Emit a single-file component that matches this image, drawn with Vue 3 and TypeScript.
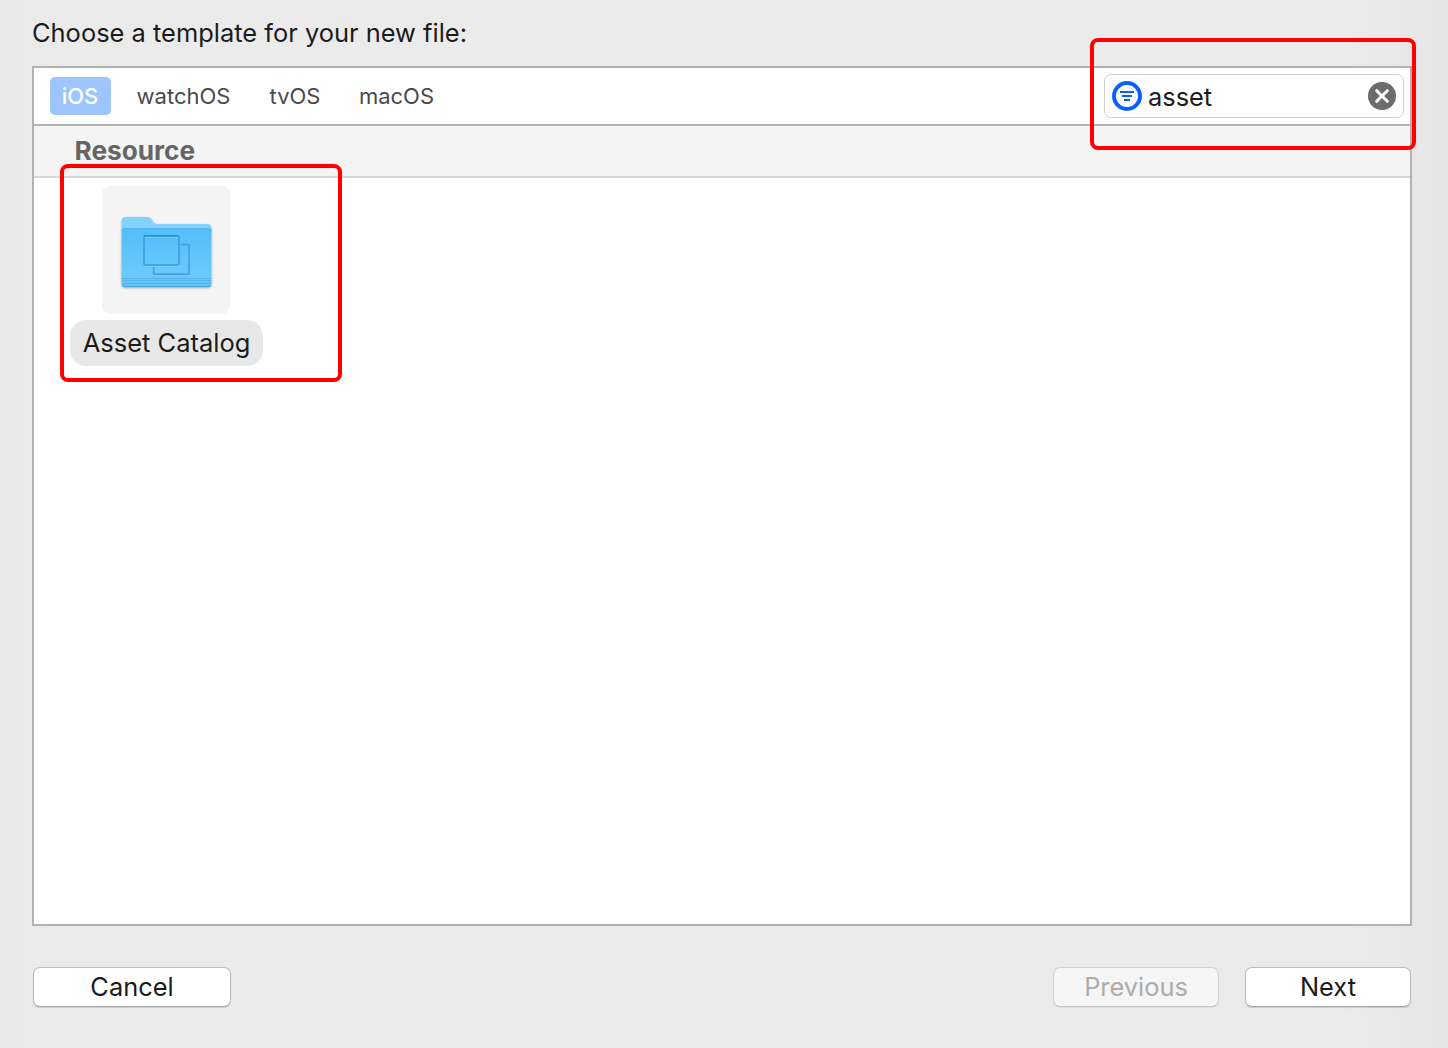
<script setup lang="ts">
import { ref } from 'vue'

interface Platform {
  name: string
  slug: string
}

const platforms: Platform[] = [
  { name: 'iOS', slug: 'ios' },
  { name: 'watchOS', slug: 'watchos' },
  { name: 'tvOS', slug: 'tvos' },
  { name: 'macOS', slug: 'macos' },
]
const selected = ref('ios')
const query = ref('asset')
</script>

<template>
  <main class="dialog">
    <h1 class="title"><span>Choose a template for your new file:</span></h1>

    <section class="panel">
      <header class="toolbar">
        <nav class="tabs">
          <button
            v-for="p in platforms"
            :key="p.slug"
            class="tab"
            :class="[p.slug, { active: selected === p.slug }]"
            @click="selected = p.slug"
          >{{ p.name }}</button>
        </nav>
        <div class="search">
          <svg class="filter" width="30" height="30" viewBox="0 0 30 30">
            <circle cx="15" cy="15" r="13" fill="none" stroke="#0a60ff" stroke-width="4" />
            <path d="M8 11h14M10 15h10M12 19h6" fill="none" stroke="#0a60ff" stroke-width="2" />
          </svg>
          <span class="query">{{ query }}</span>
          <svg class="clear" width="28" height="28" viewBox="0 0 28 28" @click="query = ''">
            <circle cx="14" cy="14" r="14" fill="#6c6c6c" />
            <path d="M8.7 8.7l10.6 10.6M19.3 8.7L8.7 19.3" fill="none" stroke="#fff" stroke-width="3" stroke-linecap="round" />
          </svg>
        </div>
        <div class="mark mark-search"></div>
      </header>

      <h2 class="group"><span>Resource</span></h2>

      <div class="grid">
        <div class="item">
          <div class="tile">
            <svg width="128" height="128" viewBox="0 0 128 128">
              <defs>
                <linearGradient id="front" x1="0" y1="0" x2="0" y2="1">
                  <stop offset="0" stop-color="#54bdf6" />
                  <stop offset="0.78" stop-color="#69cafd" />
                  <stop offset="1" stop-color="#62c3f6" />
                </linearGradient>
                <filter id="drop" x="-10%" y="-10%" width="120%" height="125%">
                  <feDropShadow dx="0" dy="1" stdDeviation="0.9" flood-color="#000" flood-opacity="0.32" />
                </filter>
              </defs>
              <g filter="url(#drop)">
                <path d="M19.700 97V35q0-4 4-4h21.300q2.500 0 4 1.800l2.600 3.400q1.300 1.800 3.500 1.800H105.300q4 0 4 4V97q0 4-4 4h-81.600q-4 0-4-4z" fill="#84d2fc" />
                <path d="M19.700 97V45q0-3 3-3h83.600q3 0 3 3V97q0 4-4 4h-81.600q-4 0-4-4z" fill="url(#front)" />
              </g>
              <path d="M19.700 45q0-2.500 3-2.500h83.600q3 0 3 2.500" fill="none" stroke="#4fb8f2" stroke-width="1" />
              <path d="M19.700 92.500h89.600M19.700 94.500h89.600M19.700 97.500h89.600" stroke="#55b5ea" stroke-width="1" />
              <path d="M20.500 99.500q1 1 3 1h82q2 0 3-1" fill="none" stroke="#48a6da" stroke-width="1.200" />
              <g fill="none" stroke-width="2" stroke-linejoin="round">
                <rect x="42" y="51" width="35" height="29" rx="1.500" stroke="#8bd8ff" stroke-opacity="0.5" />
                <rect x="42" y="50" width="35" height="29" rx="1.500" stroke="#41a5e3" />
                <path d="M42 49.700H77" stroke="#2e8fcf" stroke-width="1.400" />
                <path d="M79 58.700h8.100V88.100H51.700V81" stroke="#41a5e3" stroke-width="1.800" />
              </g>
            </svg>
          </div>
          <div class="caption"><span>Asset Catalog</span></div>
        </div>
        <div class="mark mark-item"></div>
      </div>
    </section>

    <footer class="actions">
      <button class="btn cancel">Cancel</button>
      <button class="btn previous" disabled>Previous</button>
      <button class="btn next">Next</button>
    </footer>
  </main>
</template>

<style>
body {
  background: #ebebeb;
}
</style>

<style scoped>
.dialog {
  box-sizing: border-box;
  width: 1448px;
  height: 1048px;
  padding: 0 36px 0 32px;
  display: flex;
  flex-direction: column;
  overflow: hidden;
  background: linear-gradient(90deg, #e9e9e9 0, #ebebeb 60px, #ebebeb 1340px, #e6e6e6 1448px);
  font-family: Inter, "Liberation Sans", sans-serif;
  font-weight: 430;
  color: #1b1b1b;
}
.title {
  margin: 0;
  height: 66px;
  line-height: 66px;
  font-size: 25.45px;
  font-weight: 430;
  white-space: nowrap;
}
.panel {
  box-sizing: border-box;
  width: 1380px;
  height: 860px;
  border: 2px solid #b2b2b2;
  background: #fff;
}
.toolbar {
  position: relative;
  display: flex;
  align-items: center;
  justify-content: space-between;
  height: 56px;
  padding: 0 6px 0 16px;
  border-bottom: 2px solid #b2b2b2;
}
.tabs {
  display: flex;
}
.tab {
  height: 38px;
  padding: 0;
  border: 0;
  border-radius: 5px;
  background: none;
  font: 420 22px/38px Inter, sans-serif;
  color: #4a4a4a;
  text-align: center;
  white-space: nowrap;
}
.ios { box-sizing: border-box; width: 61px; padding-right: 1px; }
.watchos { width: 117px; margin-left: 14px; }
.tvos { width: 76px; margin-left: 15px; }
.macos { width: 100px; margin-left: 13.500px; }
.tab.active {
  background: #9ec5ff;
  color: #fff;
  font-weight: 480;
}
.search {
  box-sizing: border-box;
  display: flex;
  align-items: center;
  width: 300px;
  height: 44px;
  padding: 0 7px;
  border: 1.500px solid #d0d0d0;
  border-radius: 7px;
  background: #fff;
}
.query {
  flex: 1;
  margin-left: 6px;
  padding-top: 2px;
  font-size: 25.4px;
  line-height: 40px;
}
.mark {
  position: absolute;
  box-sizing: border-box;
  border: 4px solid #f00;
  border-radius: 8px;
  pointer-events: none;
}
.mark-search {
  top: -30px;
  right: -6px;
  width: 326px;
  height: 112px;
}
.mark-item {
  top: -14px;
  left: 26px;
  width: 282px;
  height: 218px;
}
.group {
  margin: 0;
  height: 50px;
  padding-left: 40.500px;
  border-bottom: 2px solid #d6d6d6;
  background: #f4f4f4;
  font-size: 26.2px;
  line-height: 50px;
  font-weight: 720;
  color: #656565;
}
.grid {
  position: relative;
  display: flex;
  padding: 8px 0 0 36px;
}
.item {
  display: flex;
  flex-direction: column;
  gap: 6px;
  width: 193px;
}
.tile {
  width: 128px;
  height: 128px;
  margin-left: 32px;
  border-radius: 8px;
  background: #f4f4f4;
}
.tile svg {
  display: block;
}
.caption {
  width: 193px;
  height: 46px;
  border-radius: 16px;
  background: #e8e8e8;
  font-size: 25.5px;
  line-height: 46px;
  text-align: center;
  white-space: nowrap;
}
.actions {
  display: flex;
  padding: 41px 1px 0;
}
.btn {
  box-sizing: border-box;
  width: 166px;
  height: 40px;
  padding: 0;
  border: 1px solid #bdbdbd;
  border-bottom-color: #a6a6a6;
  border-radius: 7px;
  background: #fff;
  box-shadow: 0 1px 1px rgba(0, 0, 0, 0.14);
  font: 430 25.4px/38px Inter, sans-serif;
  color: #1b1b1b;
}
.cancel {
  width: 198px;
}
.previous {
  margin-left: auto;
  margin-right: 26px;
  border-color: #d2d2d2;
  border-bottom-color: #c4c4c4;
  background: #f5f5f5;
  box-shadow: 0 1px 1px rgba(0, 0, 0, 0.06);
  color: #acacac;
}
</style>
